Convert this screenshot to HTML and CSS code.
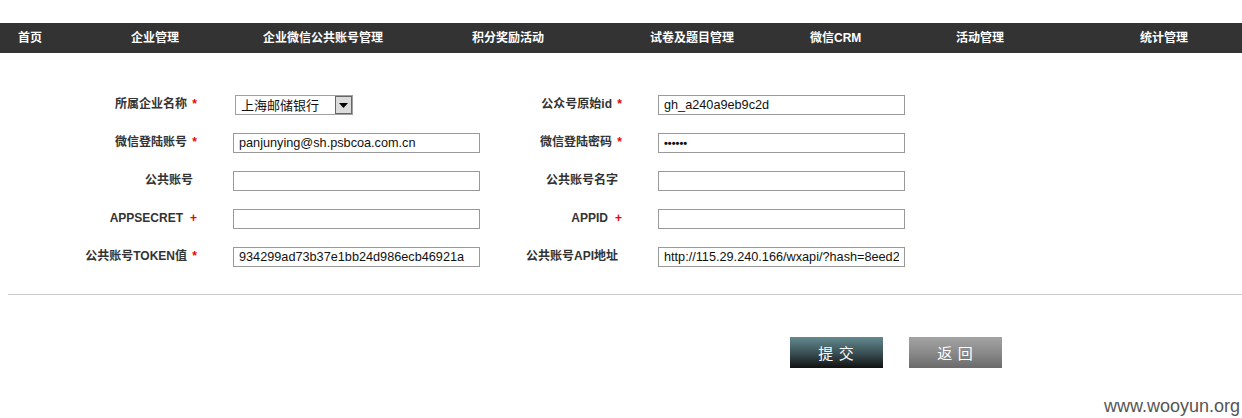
FILE: index.html
```html
<!DOCTYPE html>
<html lang="zh-CN">
<head>
<meta charset="utf-8">
<title>企业微信公共账号管理</title>
<link rel="stylesheet" href="styles.css">
</head>
<body>
<div class="page">
  <nav class="nav">
    <a class="nav-item">首页</a>
    <a class="nav-item">企业管理</a>
    <a class="nav-item">企业微信公共账号管理</a>
    <a class="nav-item">积分奖励活动</a>
    <a class="nav-item">试卷及题目管理</a>
    <a class="nav-item">微信CRM</a>
    <a class="nav-item">活动管理</a>
    <a class="nav-item">统计管理</a>
  </nav>

  <form class="form">
    <div class="grid">
      <label class="label">所属企业名称<span class="mark">*</span></label>
      <div class="field">
        <div class="select">
          <span class="select-text">上海邮储银行</span>
          <span class="select-btn"><svg width="9" height="5" viewBox="0 0 9 5"><path d="M0 0h9L4.5 5z" fill="#000"/></svg></span>
        </div>
      </div>
      <label class="label">公众号原始id<span class="mark">*</span></label>
      <div class="field"><input class="input" type="text" value="gh_a240a9eb9c2d"></div>

      <label class="label">微信登陆账号<span class="mark">*</span></label>
      <div class="field"><input class="input" type="text" value="panjunying@sh.psbcoa.com.cn"></div>
      <label class="label">微信登陆密码<span class="mark">*</span></label>
      <div class="field"><input class="input pwd" type="text" value="••••••"></div>

      <label class="label plain">公共账号</label>
      <div class="field"><input class="input" type="text" value=""></div>
      <label class="label plain">公共账号名字</label>
      <div class="field"><input class="input" type="text" value=""></div>

      <label class="label">APPSECRET<span class="mark plus">+</span></label>
      <div class="field"><input class="input" type="text" value=""></div>
      <label class="label">APPID<span class="mark plus">+</span></label>
      <div class="field"><input class="input" type="text" value=""></div>

      <label class="label">公共账号TOKEN值<span class="mark">*</span></label>
      <div class="field"><input class="input" type="text" value="934299ad73b37e1bb24d986ecb46921a"></div>
      <label class="label plain">公共账号API地址</label>
      <div class="field"><input class="input" type="text" value="http://115.29.240.166/wxapi/?hash=8eed2"></div>
    </div>

    <hr class="sep">

    <div class="actions">
      <button type="button" class="btn btn-submit">提 交</button>
      <button type="button" class="btn btn-back">返 回</button>
    </div>
  </form>

  <div class="watermark">www.wooyun.org</div>
</div>
</body>
</html>
```

FILE: styles.css
```css
* { box-sizing: border-box; }

html, body {
  margin: 0;
  padding: 0;
  background: #fff;
}

body {
  font-family: "Liberation Sans", "Noto Sans CJK SC", Arial, sans-serif;
  font-size: 12px;
  color: #333;
}

.page {
  position: relative;
  width: 1242px;
  height: 418px;
  overflow: hidden;
  padding-top: 23px;
}

.nav {
  height: 30px;
  background: #333;
  display: grid;
  grid-template-columns: 113px 132px 209px 178px 160px 146px 184px 1fr;
  padding-left: 18px;
  align-items: center;
}

.nav-item {
  color: #fff;
  font-weight: bold;
  font-size: 12px;
  line-height: 30px;
  white-space: nowrap;
  text-decoration: none;
}

.form {
  margin: 0;
  padding-top: 42px;
}

.grid {
  display: grid;
  grid-template-columns: 197px 36px 247px 142px 36px 247px;
  grid-auto-rows: 20px;
  row-gap: 18px;
}

.label {
  text-align: right;
  font-weight: bold;
  font-size: 12px;
  line-height: 16px;
  padding-top: 1px;
  white-space: nowrap;
  color: #333;
}

.label.plain { padding-right: 4px; }

.label:nth-child(4n+1) { grid-column: 1; }
.label:nth-child(4n+3) { grid-column: 4; }

.field:nth-child(4n+2) { grid-column: 3; }
.field:nth-child(4n+4) { grid-column: 6; }

.mark {
  color: #e00;
  display: inline-block;
  width: 10px;
  text-align: right;
}

.mark.plus { width: 14px; }

.input {
  display: block;
  width: 247px;
  height: 20px;
  margin: 0;
  border: 1px solid #999;
  padding: 0 5px;
  font-family: "Liberation Sans", Arial, sans-serif;
  font-size: 12.7px;
  color: #111;
  background: #fff;
  outline: none;
}

.input.pwd {
  font-size: 11px;
  letter-spacing: 0;
  font-weight: bold;
}

.select {
  display: flex;
  width: 118px;
  height: 20px;
  margin-left: 2px;
  border: 1px solid #a0a0a0;
  background: #fff;
}

.select-text {
  flex: 1;
  font-family: "Noto Sans CJK SC", sans-serif;
  font-size: 13px;
  line-height: 18px;
  padding-left: 5px;
  color: #111;
}

.select-btn {
  width: 17px;
  height: 18px;
  background: #dcdcdc;
  border: 1px solid #666;
  display: flex;
  align-items: center;
  justify-content: center;
}

.sep {
  margin: 27px 0 0 8px;
  border: 0;
  border-top: 1px solid #ccc;
  height: 0;
}

.actions {
  display: flex;
  gap: 26px;
  padding-left: 790px;
  margin-top: 42px;
}

.btn {
  width: 93px;
  height: 31px;
  border: 0;
  padding: 0;
  color: #fff;
  font-family: "Noto Sans CJK SC", sans-serif;
  font-size: 15px;
  letter-spacing: 1px;
  cursor: pointer;
}

.btn-submit {
  background: linear-gradient(to bottom, #628a90 0%, #3c5256 50%, #111 100%);
}

.btn-back {
  background: linear-gradient(to bottom, #a4a4a4 0%, #8a8a8a 50%, #6a6a6a 100%);
}

.watermark {
  position: absolute;
  right: 2px;
  bottom: 1px;
  font-family: "Liberation Sans", Arial, sans-serif;
  font-size: 18px;
  color: #555;
}
```
